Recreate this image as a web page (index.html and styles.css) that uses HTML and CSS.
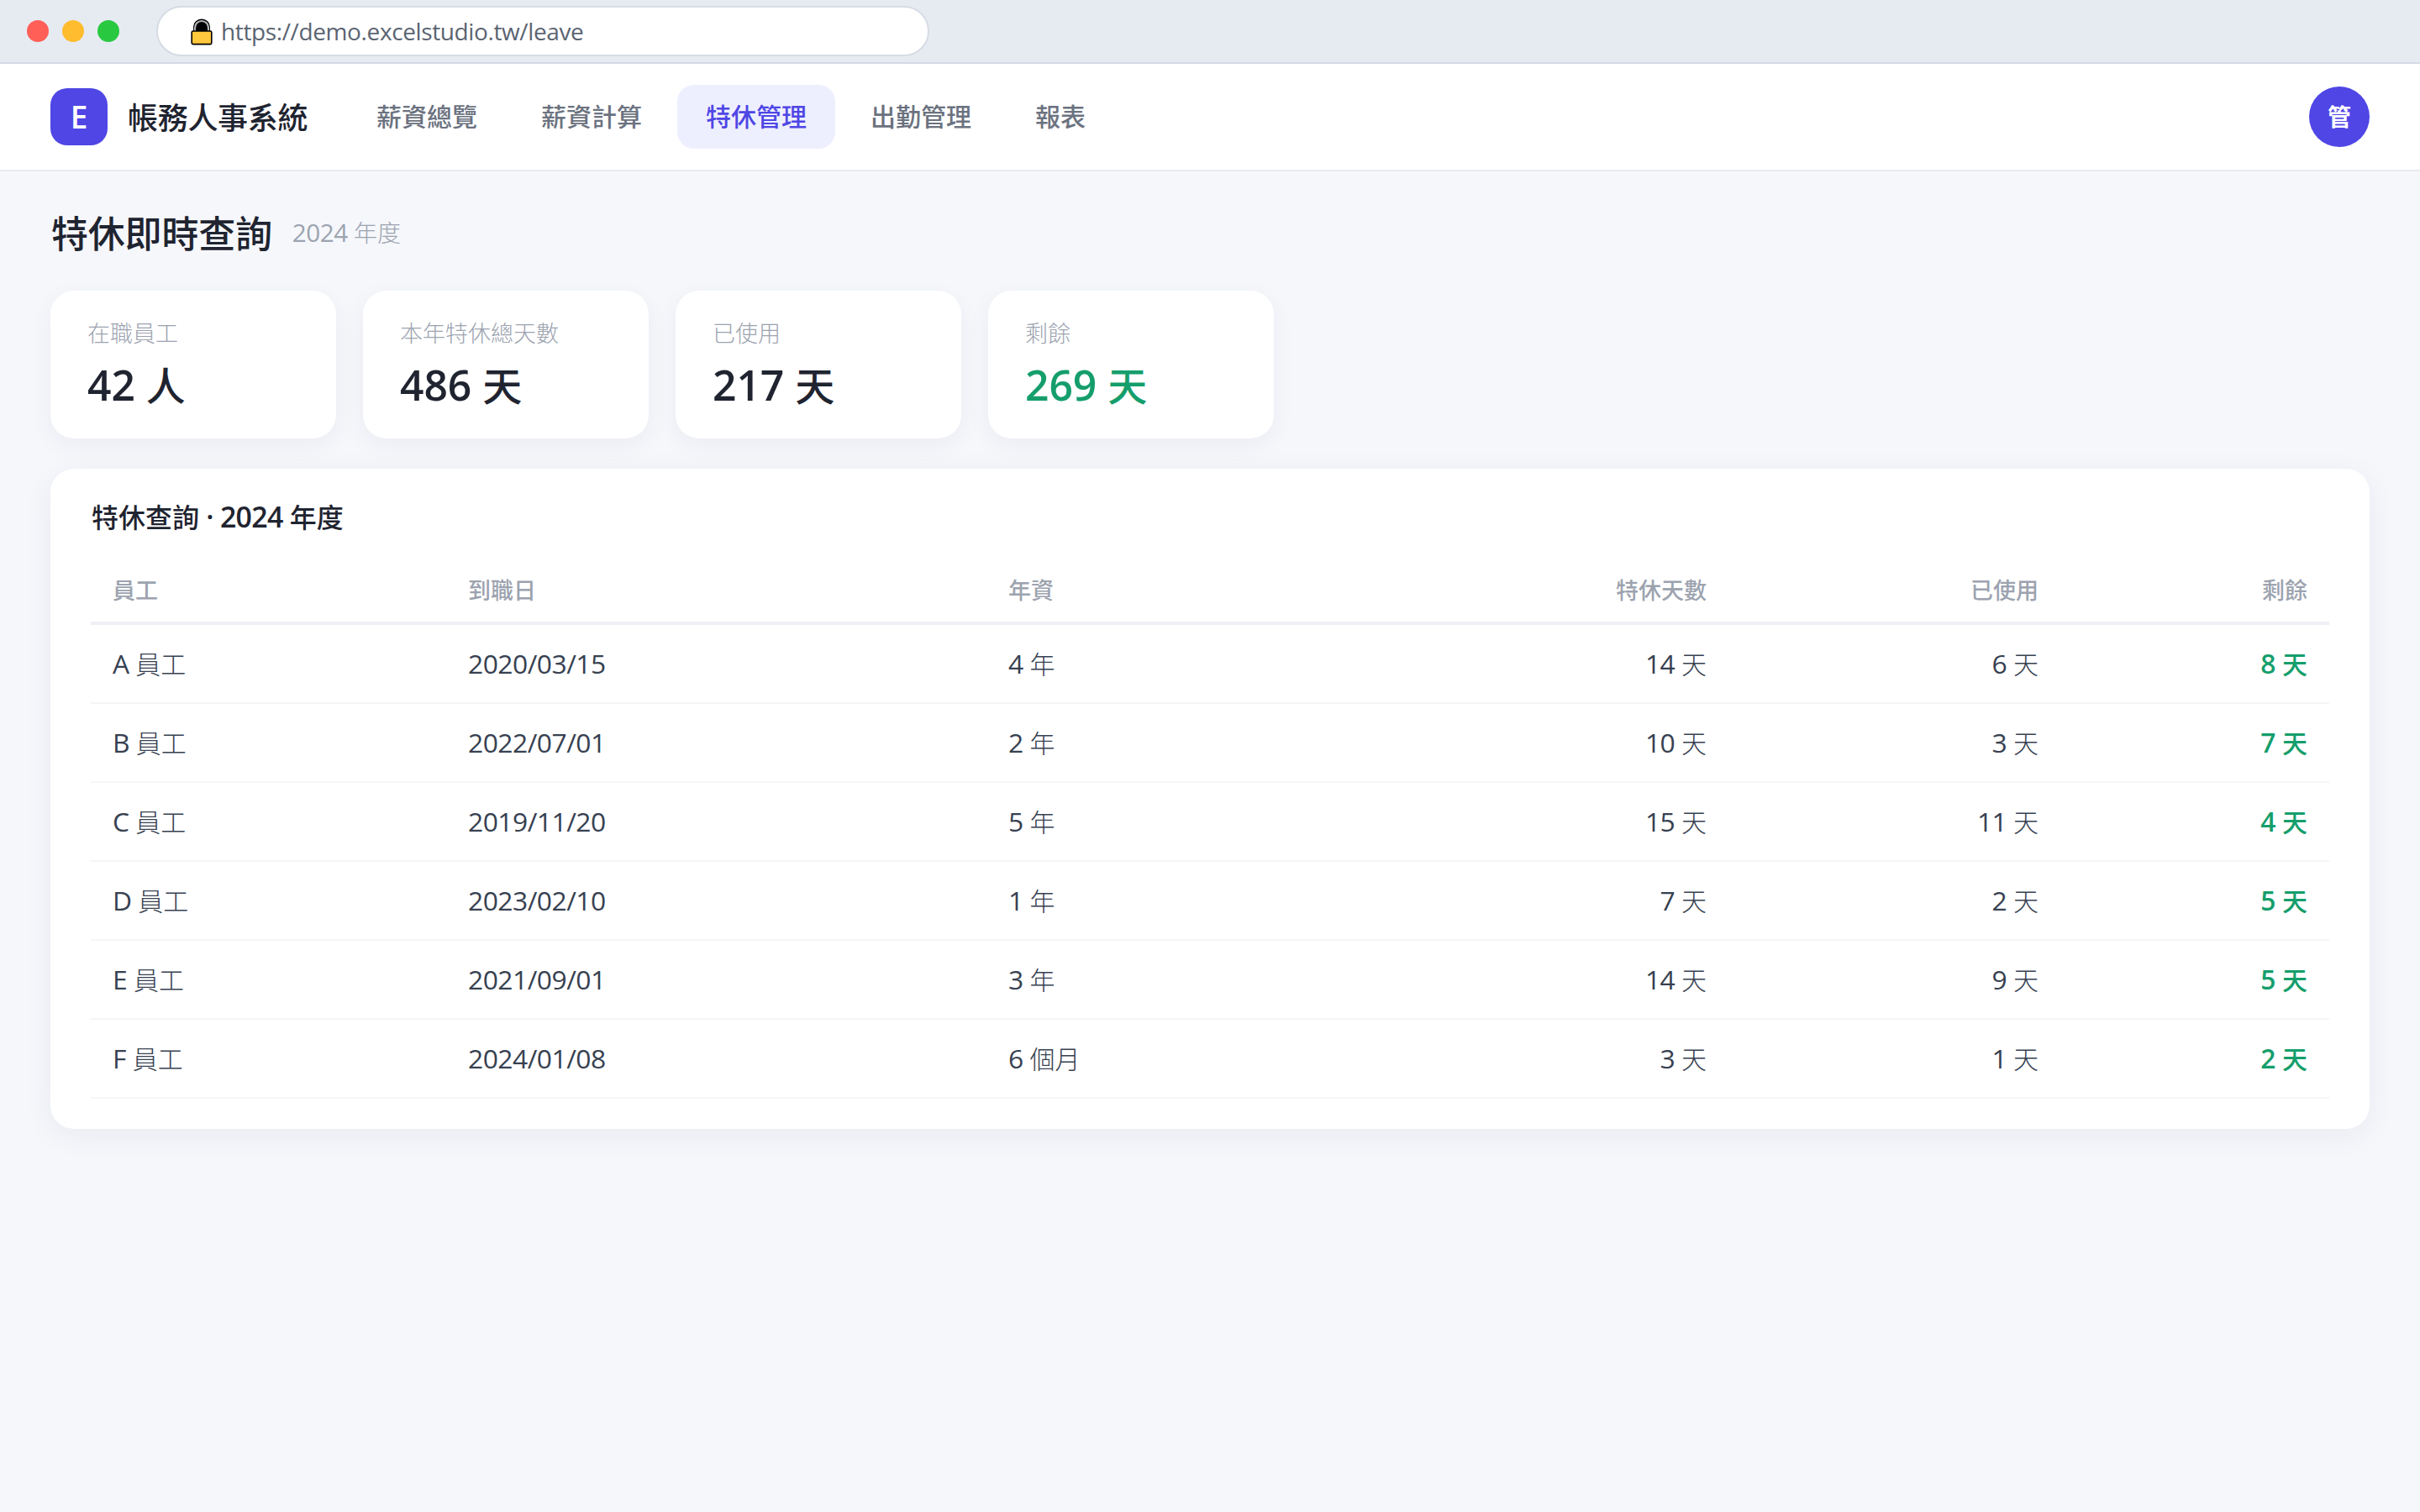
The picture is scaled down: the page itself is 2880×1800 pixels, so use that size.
FILE: index.html
```html
<!DOCTYPE html>
<html lang="zh-Hant">
<head>
<meta charset="utf-8">
<title>帳務人事系統</title>
<link rel="stylesheet" href="styles.css">
</head>
<body>
<div class="browser-bar">
  <div class="dots"><i class="dot red"></i><i class="dot yellow"></i><i class="dot green"></i></div>
  <div class="address">
    <svg class="lock" width="26" height="32" viewBox="0 0 26 32">
      <path d="M3 16V10a10 9.5 0 0 1 20 0v6z" fill="#000"/>
      <path d="M5 15V11a8 8 0 0 1 16 0v4" fill="none" stroke="#b4b6ba" stroke-width="2.2"/>
      <rect x="1.2" y="15" width="23.6" height="15.6" rx="1.6" fill="#ffc83d" stroke="#000" stroke-width="1.6"/>
    </svg>
    <span class="url">https://demo.excelstudio.tw/leave</span>
  </div>
</div>
<header class="topbar">
  <div class="logo">E</div>
  <div class="brand">帳務人事系統</div>
  <nav class="nav">
    <a class="nav-item">薪資總覽</a>
    <a class="nav-item">薪資計算</a>
    <a class="nav-item active">特休管理</a>
    <a class="nav-item">出勤管理</a>
    <a class="nav-item">報表</a>
  </nav>
  <div class="avatar">管</div>
</header>
<main class="page">
  <div class="heading">
    <h1>特休即時查詢</h1>
    <span class="year"><b class="n">2024 </b>年度</span>
  </div>
  <section class="stats">
    <div class="stat"><div class="label">在職員工</div><div class="value"><b class="n">42 </b>人</div></div>
    <div class="stat"><div class="label">本年特休總天數</div><div class="value"><b class="n">486 </b>天</div></div>
    <div class="stat"><div class="label">已使用</div><div class="value"><b class="n">217 </b>天</div></div>
    <div class="stat"><div class="label">剩餘</div><div class="value green-text"><b class="n">269 </b>天</div></div>
  </section>
  <section class="panel">
    <h2>特休查詢<b class="n"> · 2024 </b>年度</h2>
    <table>
      <colgroup><col class="c1"><col class="c2"><col class="c3"><col class="c4"><col class="c5"><col class="c6"></colgroup>
      <thead>
        <tr><th>員工</th><th>到職日</th><th>年資</th><th class="num">特休天數</th><th class="num">已使用</th><th class="num">剩餘</th></tr>
      </thead>
      <tbody>
        <tr><td><b class="n">A </b>員工</td><td><b class="n">2020/03/15</b></td><td><b class="n">4 </b>年</td><td class="num"><b class="n">14 </b>天</td><td class="num"><b class="n">6 </b>天</td><td class="num left"><b class="n">8 </b>天</td></tr>
        <tr><td><b class="n">B </b>員工</td><td><b class="n">2022/07/01</b></td><td><b class="n">2 </b>年</td><td class="num"><b class="n">10 </b>天</td><td class="num"><b class="n">3 </b>天</td><td class="num left"><b class="n">7 </b>天</td></tr>
        <tr><td><b class="n">C </b>員工</td><td><b class="n">2019/11/20</b></td><td><b class="n">5 </b>年</td><td class="num"><b class="n">15 </b>天</td><td class="num"><b class="n">11 </b>天</td><td class="num left"><b class="n">4 </b>天</td></tr>
        <tr><td><b class="n">D </b>員工</td><td><b class="n">2023/02/10</b></td><td><b class="n">1 </b>年</td><td class="num"><b class="n">7 </b>天</td><td class="num"><b class="n">2 </b>天</td><td class="num left"><b class="n">5 </b>天</td></tr>
        <tr><td><b class="n">E </b>員工</td><td><b class="n">2021/09/01</b></td><td><b class="n">3 </b>年</td><td class="num"><b class="n">14 </b>天</td><td class="num"><b class="n">9 </b>天</td><td class="num left"><b class="n">5 </b>天</td></tr>
        <tr><td><b class="n">F </b>員工</td><td><b class="n">2024/01/08</b></td><td><b class="n">6 </b>個月</td><td class="num"><b class="n">3 </b>天</td><td class="num"><b class="n">1 </b>天</td><td class="num left"><b class="n">2 </b>天</td></tr>
      </tbody>
    </table>
  </section>
</main>
</body>
</html>
```
FILE: styles.css
```css
* { box-sizing: border-box; }

body {
  margin: 0;
  min-height: 1800px;
  background: #f5f7fb;
  color: #1f2430;
  font-family: "Noto Sans CJK TC", "Open Sans", sans-serif;
  font-weight: 300;
}

/* Latin letters and digits set beside Chinese text */
.n {
  font-family: "Open Sans", "Noto Sans", sans-serif;
  font-weight: 400;
  font-size: 1.06em;
  line-height: 1;
  letter-spacing: -0.016em;
  white-space: pre;
}

.browser-bar {
  display: flex;
  align-items: center;
  gap: 44px;
  height: 76px;
  padding-left: 32px;
  background: #e6ebf2;
  border-bottom: 2px solid #d3d9e5;
}
.dots { display: flex; gap: 16px; }
.dot { width: 26px; height: 26px; border-radius: 50%; }
.red { background: #ff5f57; }
.yellow { background: #febc2e; }
.green { background: #28c840; }

.address {
  display: flex;
  align-items: center;
  gap: 10px;
  width: 920px;
  height: 60px;
  padding-left: 39px;
  background: #fff;
  border: 2px solid #d6dce4;
  border-radius: 30px;
}
.lock { display: block; margin-top: 2px; }
.url {
  font: 400 28px/56px "Open Sans", sans-serif;
  letter-spacing: -0.38px;
  color: #5b6472;
}

.topbar {
  display: flex;
  align-items: center;
  height: 128px;
  padding: 0 60px;
  background: #fff;
  border-bottom: 2px solid #e8eaf0;
}
.logo {
  width: 68px;
  height: 68px;
  border-radius: 20px;
  background: #4f46e5;
  color: #fff;
  font: 600 37px/68px "Open Sans", sans-serif;
  text-align: center;
}
.brand {
  width: 262px;
  margin-left: 24px;
  padding-bottom: 2px;
  font-size: 36px;
  line-height: 66px;
  font-weight: 500;
  letter-spacing: -0.3px;
}
.nav { display: flex; gap: 8px; }
.nav-item {
  padding: 0 34px 3px;
  border-radius: 20px;
  font-size: 30px;
  line-height: 73px;
  font-weight: 500;
  color: #6b7280;
}
.nav-item.active { background: #eeeffe; color: #4f46e5; }
.avatar {
  width: 72px;
  height: 72px;
  margin-left: auto;
  border-radius: 50%;
  background: #4f46e5;
  color: #fff;
  font-size: 28px;
  line-height: 70px;
  font-weight: 700;
  text-align: center;
}

.page { padding: 42px 60px 0; }
.heading {
  display: flex;
  align-items: center;
  gap: 24px;
  height: 60px;
  margin-bottom: 40px;
  padding-left: 1px;
}
h1 { margin: 0; font-size: 44px; line-height: 60px; font-weight: 500; letter-spacing: -0.2px; }
.year { font-size: 28px; line-height: 60px; color: #9ca3af; }

.stats { display: flex; gap: 32px; margin-bottom: 36px; }
.stat {
  width: 340px;
  height: 176px;
  padding: 31px 44px 0;
  background: #fff;
  border-radius: 28px;
  box-shadow: 0 8px 28px rgba(30, 35, 80, 0.05);
}
.label { font-size: 27px; line-height: 38px; color: #9ca3af; }
.value { margin-top: 8px; font-size: 47px; line-height: 68px; font-weight: 500; }
.value .n, h2 .n, .left .n { font-weight: 600; letter-spacing: -0.01em; }
.value .n { letter-spacing: -0.001em; }
h2 .n { letter-spacing: -0.02em; }
.green-text { color: #159e6c; }

.panel {
  height: 786px;
  padding: 33px 48px 0;
  background: #fff;
  border-radius: 28px;
  box-shadow: 0 8px 36px rgba(30, 35, 80, 0.06);
}
h2 { margin: 0; height: 71px; padding-left: 1px; font-size: 32px; line-height: 46px; font-weight: 500; }
table {
  width: 100%;
  border-collapse: separate;
  border-spacing: 0;
  table-layout: fixed;
}
.c1 { width: 423px; }
.c2 { width: 643px; }
.c3 { width: 488px; }
.c4 { width: 395px; }
.c5 { width: 395px; }
.c6 { width: 320px; }
th {
  height: 82px;
  padding: 2px 26px 0;
  border-bottom: 4px solid #eff0f7;
  font-size: 27px;
  line-height: 40px;
  font-weight: 500;
  color: #9ca3af;
  text-align: left;
}
td {
  height: 94px;
  padding: 0 26px 3px;
  border-bottom: 2px solid #f4f5f7;
  font-size: 30px;
  line-height: 44px;
  color: #374151;
}
.num { text-align: right; }
td.left { color: #159e6c; font-weight: 500; }
```
